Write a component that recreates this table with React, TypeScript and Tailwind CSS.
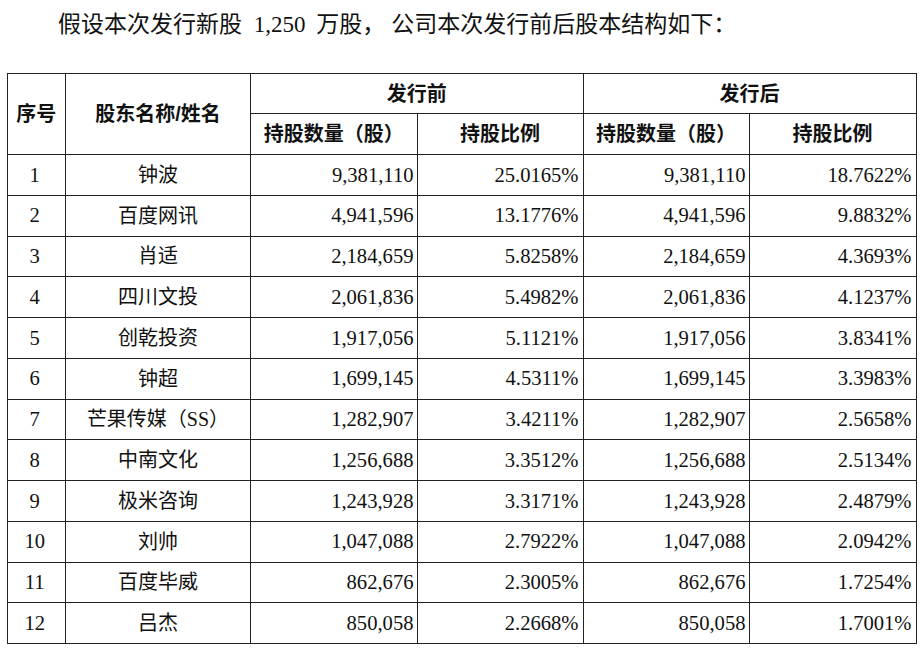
import React from 'react'

const rows = [
    ['1', '钟波', '9,381,110', '25.0165%', '9,381,110', '18.7622%'],
    ['2', '百度网讯', '4,941,596', '13.1776%', '4,941,596', '9.8832%'],
    ['3', '肖适', '2,184,659', '5.8258%', '2,184,659', '4.3693%'],
    ['4', '四川文投', '2,061,836', '5.4982%', '2,061,836', '4.1237%'],
    ['5', '创乾投资', '1,917,056', '5.1121%', '1,917,056', '3.8341%'],
    ['6', '钟超', '1,699,145', '4.5311%', '1,699,145', '3.3983%'],
    ['7', '芒果传媒（SS）', '1,282,907', '3.4211%', '1,282,907', '2.5658%'],
    ['8', '中南文化', '1,256,688', '3.3512%', '1,256,688', '2.5134%'],
    ['9', '极米咨询', '1,243,928', '3.3171%', '1,243,928', '2.4879%'],
    ['10', '刘帅', '1,047,088', '2.7922%', '1,047,088', '2.0942%'],
    ['11', '百度毕威', '862,676', '2.3005%', '862,676', '1.7254%'],
    ['12', '吕杰', '850,058', '2.2668%', '850,058', '1.7001%'],
]

const serif = "font-['Liberation_Serif','Noto_Sans_CJK_SC',serif]"
const head = "font-['Liberation_Sans','Noto_Sans_CJK_SC',sans-serif] font-bold text-[20px]"

const App = () => {
    return (
        <div className="w-[922px] h-[648px] bg-white text-[#111] overflow-hidden">
            {/* intro line */}
            <p className={`${serif} text-[23px] leading-none pl-[58px] pt-[13px] h-[73px] whitespace-nowrap`}>
                假设本次发行新股 <span className="ml-[6px]">1,250</span> <span className="ml-[5px]">万股，</span><span className="ml-[6px]">公司本次发行前后股本结构如下：</span>
            </p>

            <table className={`${serif} ml-[6.5px] w-[909px] table-fixed border-collapse text-[20.6px] leading-none`}>
                <colgroup>
                    <col className="w-[58.5px]" />
                    <col className="w-[185px]" />
                    <col className="w-[166.5px]" />
                    <col className="w-[166px]" />
                    <col className="w-[166px]" />
                    <col className="w-[167px]" />
                </colgroup>
                <thead>
                    <tr className="h-[40px]">
                        <th rowSpan={2} className={`${head} border border-[#222] text-center`}>序号</th>
                        <th rowSpan={2} className={`${head} border border-[#222] text-center`}>股东名称/姓名</th>
                        <th colSpan={2} className={`${head} border border-[#222] text-center`}>发行前</th>
                        <th colSpan={2} className={`${head} border border-[#222] text-center`}>发行后</th>
                    </tr>
                    <tr className="h-[41px]">
                        <th className={`${head} border border-[#222] text-center`}>持股数量（股）</th>
                        <th className={`${head} border border-[#222] text-center`}>持股比例</th>
                        <th className={`${head} border border-[#222] text-center`}>持股数量（股）</th>
                        <th className={`${head} border border-[#222] text-center`}>持股比例</th>
                    </tr>
                </thead>
                <tbody>
                    {rows.map((r) => (
                        <tr key={r[0]} className="h-[40.75px]">
                            <td className="border border-[#222] text-center pr-[3px]">{r[0]}</td>
                            <td className="border border-[#222] text-center text-[20px]">{r[1]}</td>
                            <td className="border border-[#222] text-right pr-[3px]">{r[2]}</td>
                            <td className="border border-[#222] text-right pr-[4px]">{r[3]}</td>
                            <td className="border border-[#222] text-right pr-[3px]">{r[4]}</td>
                            <td className="border border-[#222] text-right pr-[4px]">{r[5]}</td>
                        </tr>
                    ))}
                </tbody>
            </table>
        </div>
    )
}

export default App
